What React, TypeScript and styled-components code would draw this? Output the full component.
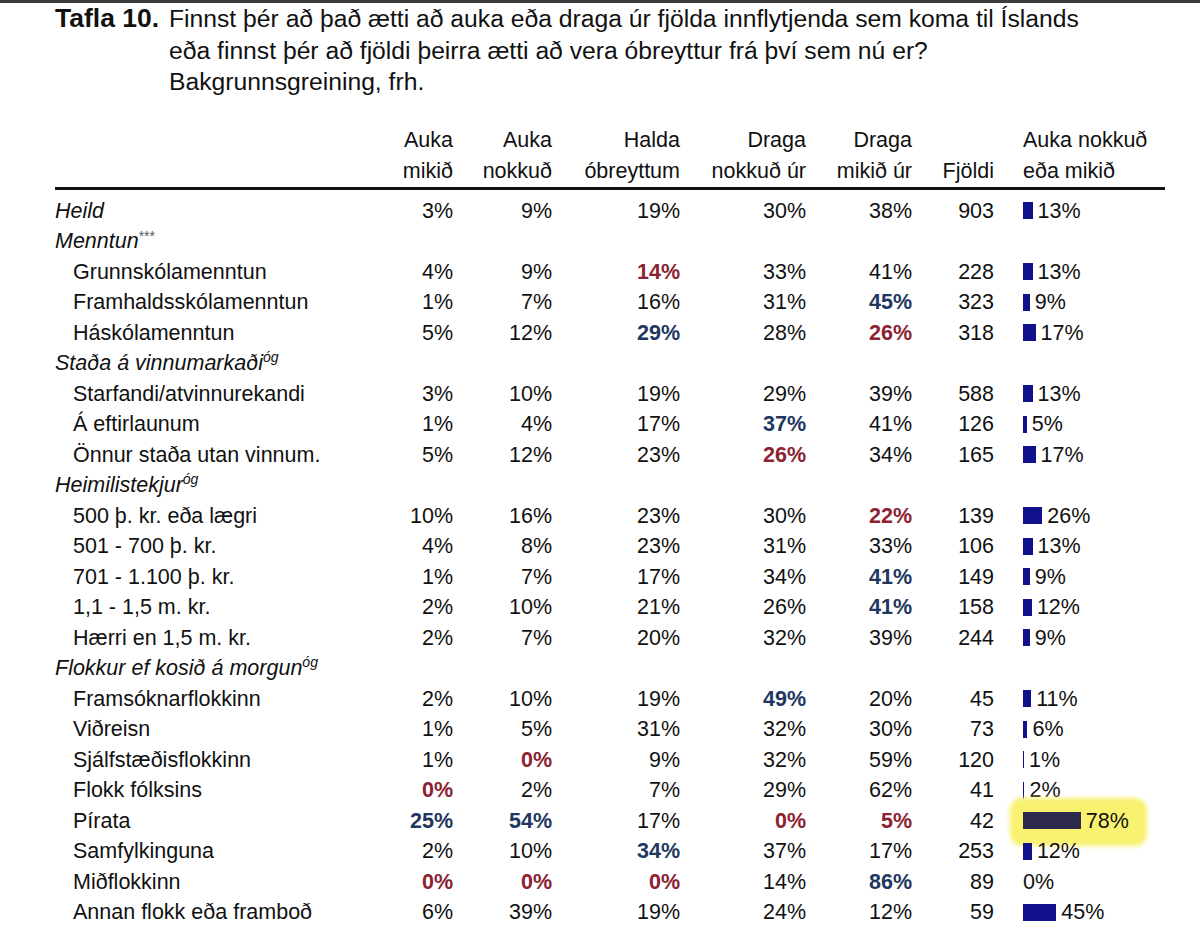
import React from 'react';
import styled, { createGlobalStyle } from 'styled-components';

const BAR_SCALE = 0.74;

const GlobalStyle = createGlobalStyle`
  html, body {
    margin: 0;
    padding: 0;
    background: #fff;
  }
  body {
    font-family: "Liberation Sans", Arial, sans-serif;
    color: #111;
    overflow: hidden;
  }
`;

const Page = styled.div`
  border-top: 3px solid #3b3b3b;
  padding-left: 55px;
  width: 1200px;
  box-sizing: border-box;
`;

const Title = styled.div`
  display: flex;
  align-items: baseline;
  line-height: 31.5px;
  margin-bottom: 27px;
`;

const TitleLabel = styled.div`
  font-weight: bold;
  font-size: 26.5px;
  width: 114px;
  flex: none;
`;

const TitleText = styled.div`
  font-size: 24.7px;
`;

const Table = styled.div`
  width: 1110px;
  font-size: 21.5px;
`;

const COLUMNS = '300px 98px 99px 128px 126px 106px 82px 171px';

const HeadRow = styled.div`
  display: grid;
  grid-template-columns: ${COLUMNS};
  line-height: 31px;
  border-bottom: 3px solid #111;
  margin-bottom: 6px;
`;

const HeadCell = styled.div<{ $left?: boolean }>`
  text-align: ${(p) => (p.$left ? 'left' : 'right')};
  padding-left: ${(p) => (p.$left ? '29px' : '0')};
  white-space: nowrap;
  display: flex;
  flex-direction: column;
  justify-content: flex-end;
`;

const Row = styled.div`
  display: grid;
  grid-template-columns: ${COLUMNS};
  height: 30.5px;
  line-height: 30.5px;
`;

const Label = styled.div<{ $group?: boolean }>`
  font-style: ${(p) => (p.$group ? 'italic' : 'normal')};
  padding-left: ${(p) => (p.$group ? '0' : '18px')};
  white-space: nowrap;
`;

const Sup = styled.span`
  font-size: 14px;
  vertical-align: 8px;
  line-height: 0;
`;

const Stars = styled.span`
  font-size: 14px;
  font-style: normal;
  color: #555;
  vertical-align: 7px;
  line-height: 0;
`;

type Tone = 'r' | 'b' | undefined;

const Value = styled.div<{ $tone?: Tone }>`
  text-align: right;
  font-weight: ${(p) => (p.$tone ? 'bold' : 'normal')};
  color: ${(p) => (p.$tone === 'r' ? '#8c2232' : p.$tone === 'b' ? '#22375f' : '#111')};
`;

const BarCell = styled.div`
  position: relative;
  display: flex;
  align-items: center;
  padding-left: 29px;
`;

const Bar = styled.span<{ $marked?: boolean }>`
  position: relative;
  display: inline-block;
  height: 17px;
  background: ${(p) => (p.$marked ? '#2e2a4e' : '#11118c')};
  margin-right: 5px;
  flex: none;
`;

const Pct = styled.span`
  position: relative;
`;

const Highlight = styled.span`
  position: absolute;
  left: 16px;
  top: -8px;
  width: 137px;
  height: 48px;
  border-radius: 12px;
  background: #f9f170;
  filter: blur(2px);
`;

type Cell = number | [number, Tone];

interface Line {
  label: string;
  group?: boolean;
  sup?: string;
  stars?: boolean;
  values?: Cell[];
  n?: number;
  pct?: number;
  mark?: boolean;
}

const R = (v: number): Cell => [v, 'r'];
const B = (v: number): Cell => [v, 'b'];

const lines: Line[] = [
  { label: 'Heild', group: true, values: [3, 9, 19, 30, 38], n: 903, pct: 13 },
  { label: 'Menntun', group: true, stars: true },
  { label: 'Grunnskólamenntun', values: [4, 9, R(14), 33, 41], n: 228, pct: 13 },
  { label: 'Framhaldsskólamenntun', values: [1, 7, 16, 31, B(45)], n: 323, pct: 9 },
  { label: 'Háskólamenntun', values: [5, 12, B(29), 28, R(26)], n: 318, pct: 17 },
  { label: 'Staða á vinnumarkaði', group: true, sup: 'óg' },
  { label: 'Starfandi/atvinnurekandi', values: [3, 10, 19, 29, 39], n: 588, pct: 13 },
  { label: 'Á eftirlaunum', values: [1, 4, 17, B(37), 41], n: 126, pct: 5 },
  { label: 'Önnur staða utan vinnum.', values: [5, 12, 23, R(26), 34], n: 165, pct: 17 },
  { label: 'Heimilistekjur', group: true, sup: 'óg' },
  { label: '500 þ. kr. eða lægri', values: [10, 16, 23, 30, R(22)], n: 139, pct: 26 },
  { label: '501 - 700 þ. kr.', values: [4, 8, 23, 31, 33], n: 106, pct: 13 },
  { label: '701 - 1.100 þ. kr.', values: [1, 7, 17, 34, B(41)], n: 149, pct: 9 },
  { label: '1,1 - 1,5 m. kr.', values: [2, 10, 21, 26, B(41)], n: 158, pct: 12 },
  { label: 'Hærri en 1,5 m. kr.', values: [2, 7, 20, 32, 39], n: 244, pct: 9 },
  { label: 'Flokkur ef kosið á morgun', group: true, sup: 'óg' },
  { label: 'Framsóknarflokkinn', values: [2, 10, 19, B(49), 20], n: 45, pct: 11 },
  { label: 'Viðreisn', values: [1, 5, 31, 32, 30], n: 73, pct: 6 },
  { label: 'Sjálfstæðisflokkinn', values: [1, R(0), 9, 32, 59], n: 120, pct: 1 },
  { label: 'Flokk fólksins', values: [R(0), 2, 7, 29, 62], n: 41, pct: 2 },
  { label: 'Pírata', values: [B(25), B(54), 17, R(0), R(5)], n: 42, pct: 78, mark: true },
  { label: 'Samfylkinguna', values: [2, 10, B(34), 37, 17], n: 253, pct: 12 },
  { label: 'Miðflokkinn', values: [R(0), R(0), R(0), 14, B(86)], n: 89, pct: 0 },
  { label: 'Annan flokk eða framboð', values: [6, 39, 19, 24, 12], n: 59, pct: 45 },
];

const heads: [string, string][] = [
  ['Auka', 'mikið'],
  ['Auka', 'nokkuð'],
  ['Halda', 'óbreyttum'],
  ['Draga', 'nokkuð úr'],
  ['Draga', 'mikið úr'],
];

function TableRow({ line }: { line: Line }) {
  return (
    <Row>
      <Label $group={line.group}>
        {line.label}
        {line.stars && <Stars>***</Stars>}
        {line.sup && <Sup>{line.sup}</Sup>}
      </Label>
      {line.values &&
        line.values.map((c, i) => {
          const [v, tone] = Array.isArray(c) ? c : [c, undefined];
          return (
            <Value key={i} $tone={tone}>
              {v}%
            </Value>
          );
        })}
      {line.values && <Value>{line.n}</Value>}
      {line.values && line.pct !== undefined && (
        <BarCell>
          {line.mark && <Highlight />}
          {line.pct > 0 && (
            <Bar $marked={line.mark} style={{ width: `${Math.max(1, line.pct * BAR_SCALE)}px` }} />
          )}
          <Pct>{line.pct}%</Pct>
        </BarCell>
      )}
    </Row>
  );
}

export default function App() {
  return (
    <>
      <GlobalStyle />
      <Page>
        <Title>
          <TitleLabel>Tafla 10.</TitleLabel>
          <TitleText>
            Finnst þér að það ætti að auka eða draga úr fjölda innflytjenda sem koma til Íslands
            <br />
            eða finnst þér að fjöldi þeirra ætti að vera óbreyttur frá því sem nú er?
            <br />
            Bakgrunnsgreining, frh.
          </TitleText>
        </Title>
        <Table>
          <HeadRow>
            <HeadCell />
            {heads.map(([a, b]) => (
              <HeadCell key={a + b}>
                <span>{a}</span>
                <span>{b}</span>
              </HeadCell>
            ))}
            <HeadCell>
              <span>Fjöldi</span>
            </HeadCell>
            <HeadCell $left>
              <span>Auka nokkuð</span>
              <span>eða mikið</span>
            </HeadCell>
          </HeadRow>
          {lines.map((l) => (
            <TableRow key={l.label} line={l} />
          ))}
        </Table>
      </Page>
    </>
  );
}
